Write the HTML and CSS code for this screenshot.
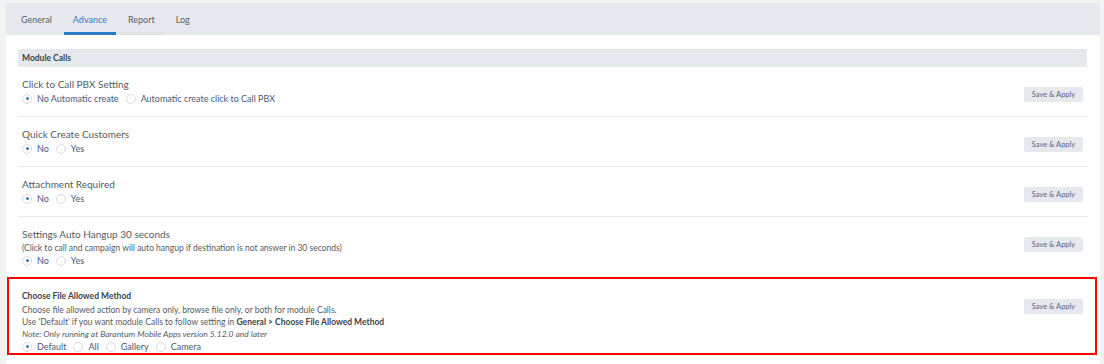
FILE: index.html
```html
<!DOCTYPE html>
<html lang="en">
<head>
    <meta charset="UTF-8">
    <meta name="viewport" content="width=device-width, initial-scale=1.0">
    <title>Settings - Advance</title>
    <link rel="stylesheet" href="styles.css">
</head>
<body>
    <div class="card">
        <ul class="tabs">
            <li class="tab">General</li>
            <li class="tab active">Advance</li>
            <li class="tab line">Report</li>
            <li class="tab">Log</li>
        </ul>
        <div class="panel">
            <h3 class="section">Module Calls</h3>

            <div class="row">
                <div class="field">
                    <p class="label">Click to Call PBX Setting</p>
                    <div class="radios">
                        <label class="radio checked"><span class="dot"></span>No Automatic create</label>
                        <label class="radio"><span class="dot"></span>Automatic create click to Call PBX</label>
                    </div>
                </div>
                <button class="btn">Save &amp; Apply</button>
            </div>

            <div class="row">
                <div class="field">
                    <p class="label">Quick Create Customers</p>
                    <div class="radios">
                        <label class="radio checked"><span class="dot"></span>No</label>
                        <label class="radio"><span class="dot"></span>Yes</label>
                    </div>
                </div>
                <button class="btn">Save &amp; Apply</button>
            </div>

            <div class="row">
                <div class="field">
                    <p class="label">Attachment Required</p>
                    <div class="radios">
                        <label class="radio checked"><span class="dot"></span>No</label>
                        <label class="radio"><span class="dot"></span>Yes</label>
                    </div>
                </div>
                <button class="btn">Save &amp; Apply</button>
            </div>

            <div class="row">
                <div class="field">
                    <p class="label">Settings Auto Hangup 30 seconds</p>
                    <p class="desc">(Click to call and campaign will auto hangup if destination is not answer in 30 seconds)</p>
                    <div class="radios">
                        <label class="radio checked"><span class="dot"></span>No</label>
                        <label class="radio"><span class="dot"></span>Yes</label>
                    </div>
                </div>
                <button class="btn">Save &amp; Apply</button>
            </div>

            <div class="row marked">
                <div class="field">
                    <p class="label strong">Choose File Allowed Method</p>
                    <p class="desc">Choose file allowed action by camera only, browse file only, or both for module Calls.</p>
                    <p class="desc">Use 'Default' if you want module Calls to follow setting in <b>General &gt; Choose File Allowed Method</b></p>
                    <p class="desc note">Note: Only running at Barantum Mobile Apps version 5.12.0 and later</p>
                    <div class="radios">
                        <label class="radio checked"><span class="dot"></span>Default</label>
                        <label class="radio"><span class="dot"></span>All</label>
                        <label class="radio"><span class="dot"></span>Gallery</label>
                        <label class="radio"><span class="dot"></span>Camera</label>
                    </div>
                </div>
                <button class="btn">Save &amp; Apply</button>
            </div>
        </div>
    </div>
</body>
</html>
```

FILE: styles.css
```css
body{
    margin: 0;
    padding: 3px 4px 0 6px;
    background-color: #f1f3f3;
    font-family: Lato, "Open Sans", sans-serif;
    font-size: 9px;
    color: #555b62;
}
.card{
    background-color: #fff;
    height: 361px;
    overflow: hidden;
}
.tabs{
    list-style: none;
    margin: 0;
    padding: 0 0 0 6px;
    height: 32px;
    display: flex;
    gap: 3px;
    background-color: #e5e8ec;
}
.tab{
    padding: 11px 9px 0;
    height: 18px;
    color: #566170;
    font-size: 9px;
    border-bottom: 3px solid transparent;
}
.tab.active{
    color: #2a7cc7;
    border-bottom-color: #2a7cc7;
}
.tab.line{
    border-bottom-color: #dde0e4;
}
.panel{
    padding: 14px 13px 0 12px;
}
.section{
    margin: 0;
    height: 18px;
    line-height: 18px;
    padding-left: 4px;
    background-color: #e5e8ec;
    font-size: 8.5px;
    font-weight: 700;
    color: #3d434a;
}
.row{
    display: flex;
    justify-content: space-between;
    align-items: flex-start;
    border-bottom: 1px solid #e6e8ea;
    padding: 10px 4px 11px 4px;
}
.row:last-child{
    border-bottom: none;
}
.field p{
    margin: 0;
}
.field .label{
    font-size: 10px;
    line-height: 15px;
}
.field .desc{
    font-size: 8.5px;
    line-height: 12px;
}
.field .label.strong{
    font-weight: 700;
    color: #3d434a;
    font-size: 8.5px;
}
.desc b{
    color: #3d434a;
}
.field .note{
    font-style: italic;
}
.radios{
    display: flex;
    gap: 7px;
    line-height: 13px;
}
.radio{
    display: flex;
    align-items: center;
    color: #4a5978;
}
.dot{
    width: 8px;
    height: 8px;
    border: 1px solid #d7dade;
    border-radius: 50%;
    margin-right: 5px;
    position: relative;
    background-color: #fff;
}
.radio.checked .dot::after{
    content: "";
    position: absolute;
    width: 3px;
    height: 3px;
    top: 2.5px;
    left: 2.5px;
    border-radius: 50%;
    background-color: #2a7cc7;
}
.btn{
    margin-top: 10px;
    width: 59px;
    height: 15px;
    padding: 0;
    border: none;
    border-radius: 2px;
    background-color: #e5e8ec;
    color: #5b6677;
    font-family: Lato, "Open Sans", sans-serif;
    font-size: 7.5px;
}
.row.marked{
    position: relative;
}
.row.marked::after{
    content: "";
    position: absolute;
    top: -2px;
    left: -11px;
    right: -10px;
    height: 74px;
    border: 2px solid #ff0000;
}
```
